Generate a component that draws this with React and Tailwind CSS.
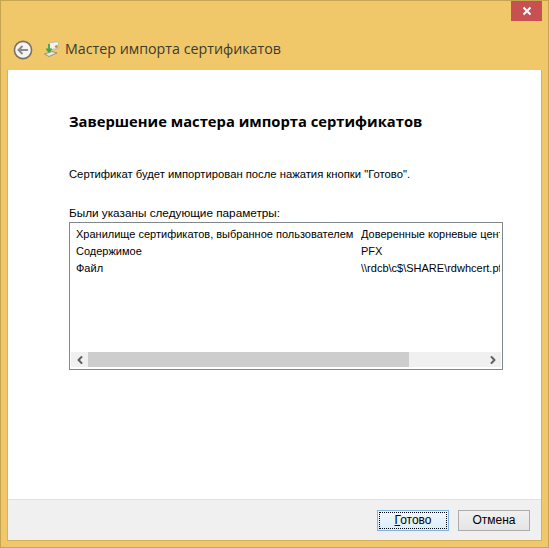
import { ChevronLeft, ChevronRight } from "lucide-react";

const BODY_FONT = "font-['Liberation_Sans',sans-serif]";

function BackButton() {
  return (
    <svg width="20" height="20" viewBox="0 0 20 20" className="shrink-0">
      <circle cx="10" cy="10" r="8.6" fill="#f7f4ee" stroke="#77726a" strokeWidth="1.6" />
      <path d="M15 10H6M9.5 6 5.5 10l4 4" fill="none" stroke="#8a8a92" strokeWidth="2" />
    </svg>
  );
}

function WizardIcon() {
  return (
    <svg width="16" height="17" viewBox="0 0 16 17" className="shrink-0">
      <path d="M5 2 14 0.5 15 7 6 9Z" fill="#f2f2ee" stroke="#a9a79c" strokeWidth="0.6" />
      <circle cx="12.5" cy="5.5" r="1.6" fill="#d9902a" />
      <path d="M5 3v7M2.5 7.5 5 11l2.5-3.5" fill="none" stroke="#3fa648" strokeWidth="1.8" />
      <path d="M0.5 13 8 10.5 13 12 5 15.5Z" fill="#e6e7e2" stroke="#77796f" strokeWidth="0.7" />
    </svg>
  );
}

const ROWS = [
  ["Хранилище сертификатов, выбранное пользователем", "Доверенные корневые центры сертификации"],
  ["Содержимое", "PFX"],
  ["Файл", "\\\\rdcb\\c$\\SHARE\\rdwhcert.pfx"],
];

function ParamsList() {
  return (
    <div className="mt-[2px] flex h-[148px] w-[434px] flex-col border border-[#82878c] bg-white p-[1px]">
      <div className="flex flex-1 flex-col overflow-hidden pl-[5px] pt-[1px] text-[11px]">
        {ROWS.map(([name, value]) => (
          <div key={name} className="flex h-[17px] items-center whitespace-nowrap">
            <span className="w-[285px] shrink-0 overflow-hidden">{name}</span>
            <span className="w-[139px] shrink-0 overflow-hidden">{value}</span>
          </div>
        ))}
      </div>
      {/* Scrollbar */}
      <div className="mb-[1px] flex h-[15px] bg-[#f0f0f0]">
        <div className="flex w-[17px] items-center justify-center">
          <ChevronLeft size={12} strokeWidth={4} className="text-[#606060]" />
        </div>
        <div className="w-[321px] bg-[#cdcdcd]" />
        <div className="flex-1" />
        <div className="flex w-[17px] items-center justify-center">
          <ChevronRight size={12} strokeWidth={4} className="text-[#606060]" />
        </div>
      </div>
    </div>
  );
}

export default function App() {
  return (
    <div className={`flex h-[548px] w-[549px] flex-col border border-[#c6a452] bg-[#f0c869] text-black ${BODY_FONT}`}>
      {/* Title bar */}
      <div className="flex h-[20px] justify-end pr-[6px]">
        <div className="flex h-[20px] w-[31px] items-center justify-center bg-[#c75050]">
          <svg width="10" height="10" viewBox="0 0 10 10">
            <path d="M1.5 1.5 8.5 8.5M8.5 1.5 1.5 8.5" stroke="#fff" strokeWidth="2" />
          </svg>
        </div>
      </div>

      {/* Wizard header */}
      <div className="flex h-[49px] items-start pl-[12px] pt-[19px]">
        <BackButton />
        <div className="ml-[11px] mt-[1px]"><WizardIcon /></div>
        <span className="ml-[5px] -mt-[1px] text-[14.25px] leading-[20px] text-[#3d3a30] font-['Open_Sans',sans-serif]">
          Мастер импорта сертификатов
        </span>
      </div>

      {/* Page */}
      <div className="mx-[6px] mb-[6px] flex flex-1 flex-col border-x border-b border-[#d4b15f] bg-white">
        <div className="flex-1 pl-[61px] leading-[14px]">
          <h1 className="pt-[41px] text-[14.75px] font-bold leading-[20px] font-['Open_Sans',sans-serif]">
            Завершение мастера импорта сертификатов
          </h1>
          <p className="mt-[36px] text-[11.25px]">
            Сертификат будет импортирован после нажатия кнопки "Готово".
          </p>
          <p className="mt-[25px] text-[11.75px]">Были указаны следующие параметры:</p>
          <ParamsList />
        </div>

        {/* Footer */}
        <div className="flex h-[41px] items-center justify-end gap-[9px] border-t border-[#dfdfdf] bg-[#f0f0f0] pr-[11px] text-[12px]">
          <button className="h-[21px] w-[72px] border border-[#7eb4ea] bg-linear-to-b from-[#f0f7fd] to-[#dcecf9] p-[1px]">
            <span className="flex h-full w-full items-center justify-center border border-dotted border-black">
              <span><span className="underline">Г</span>отово</span>
            </span>
          </button>
          <button className="h-[21px] w-[72px] border border-[#acacac] bg-linear-to-b from-[#f0f0f0] to-[#e5e5e5]">Отмена</button>
        </div>
      </div>
    </div>
  );
}
